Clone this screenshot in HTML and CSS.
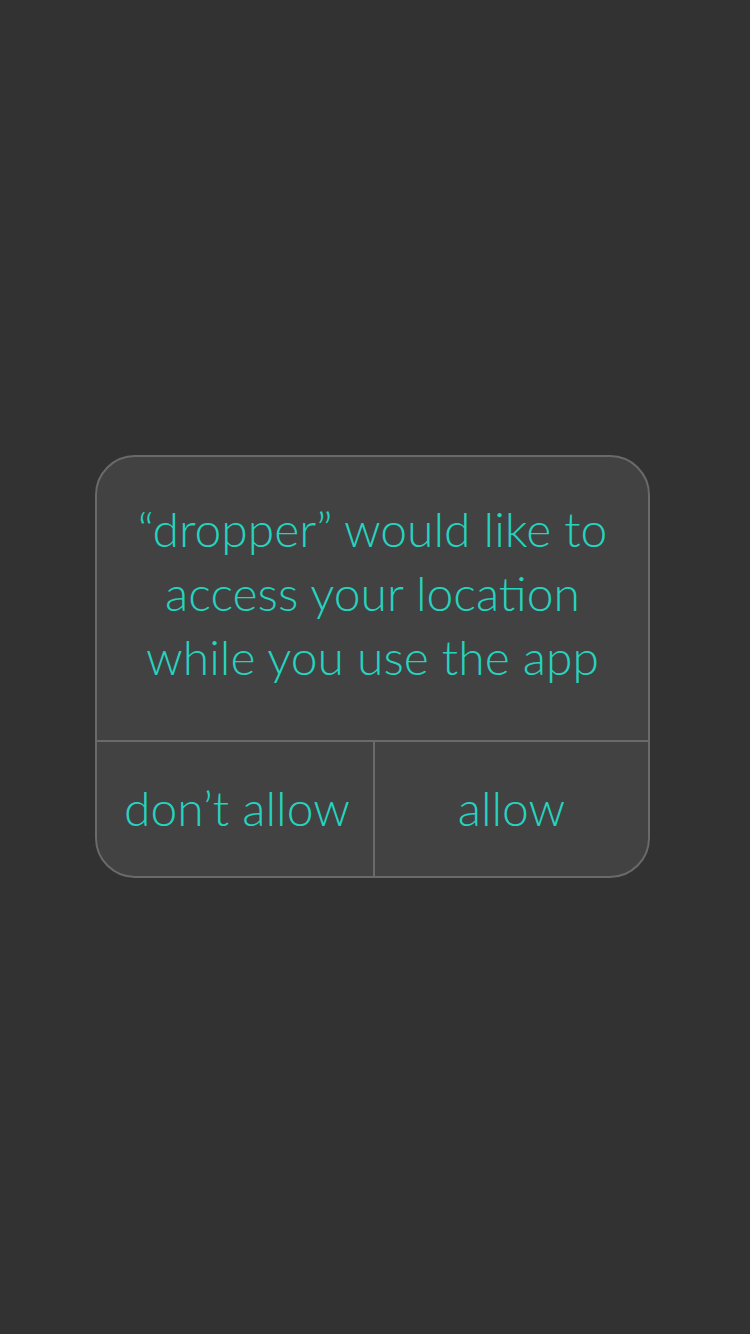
FILE: index.html
```html
<!DOCTYPE html>
<html>
<head>
<meta charset="utf-8">
<link rel="stylesheet" href="styles.css">
</head>
<body>
<div class="screen">
  <div class="dialog">
    <div class="message">“dropper” would like to<br>access your location<br>while you use the app</div>
    <div class="actions">
      <div class="btn btn-left">don’t allow</div>
      <div class="btn btn-right">allow</div>
    </div>
  </div>
</div>
</body>
</html>
```
FILE: styles.css
```css
html, body {
  margin: 0;
  padding: 0;
  background: #323232;
}
.screen {
  width: 750px;
  height: 1334px;
  display: flex;
  align-items: center;
  justify-content: center;
}
.dialog {
  width: 555px;
  height: 423px;
  box-sizing: border-box;
  margin-right: 5px;
  margin-bottom: 2px;
  border: 2px solid #6a6a6a;
  border-radius: 40px;
  background: #424242;
  display: flex;
  flex-direction: column;
  overflow: hidden;
  font-family: "Lato", "Open Sans", sans-serif;
  font-weight: 300;
  color: #26d3bf;
}
.message {
  height: 285px;
  box-sizing: border-box;
  border-bottom: 2px solid #6a6a6a;
  text-align: center;
  font-size: 48px;
  line-height: 64px;
  padding-top: 40px;
}
.actions {
  flex: 1;
  display: flex;
}
.btn {
  display: flex;
  align-items: center;
  justify-content: center;
  font-size: 48px;
  padding-bottom: 2px;
}
.btn-left {
  width: 278px;
  padding-left: 4px;
  box-sizing: border-box;
  border-right: 2px solid #6a6a6a;
}
.btn-right {
  flex: 1;
}
```
